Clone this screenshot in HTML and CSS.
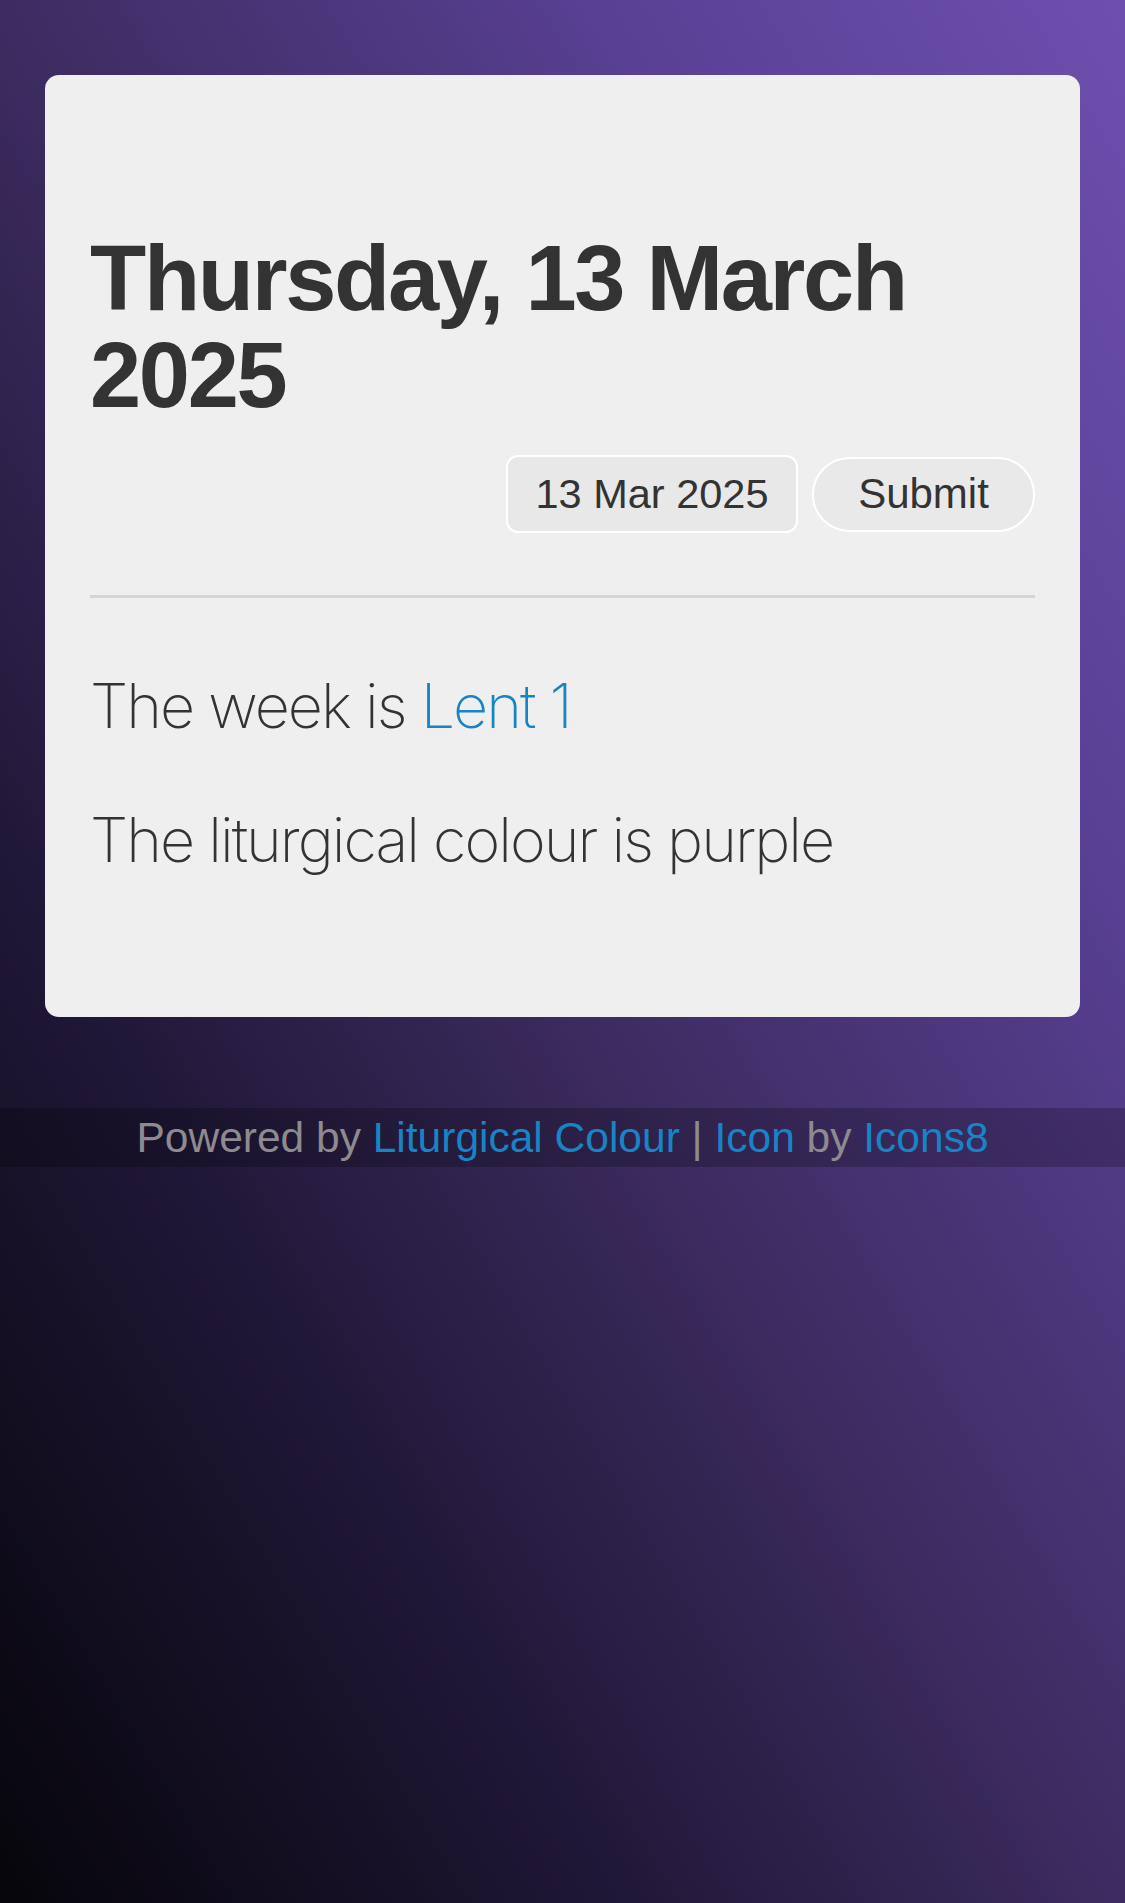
FILE: index.html
```html
<!DOCTYPE html>
<html lang="en">
<head>
<meta charset="utf-8">
<title>Liturgical Colour</title>
<link rel="stylesheet" href="styles.css">
</head>
<body>
  <main class="card">
    <h1 class="date-title">Thursday, 13 March 2025</h1>
    <form class="date-form">
      <div class="date-input">13 Mar 2025</div>
      <button type="button" class="submit-btn">Submit</button>
    </form>
    <hr class="divider">
    <p class="info">The week is <a href="#" class="link">Lent 1</a></p>
    <p class="info">The liturgical colour is purple</p>
  </main>
  <footer class="footer">
    Powered by <a href="#" class="link">Liturgical Colour</a> | <a href="#" class="link">Icon</a> by <a href="#" class="link">Icons8</a>
  </footer>
</body>
</html>
```

FILE: styles.css
```css
html, body {
  margin: 0;
  padding: 0;
}

body {
  min-height: 1903px;
  background: linear-gradient(to top right, #06050a 0%, #1f1736 27%, #3d2c61 50%, #5a4196 78%, #6d50ae 100%);
  font-family: "Liberation Sans", Arial, sans-serif;
  color: #333333;
  padding-top: 75px;
  box-sizing: border-box;
}

.card {
  margin: 0 45px;
  background: #efefef;
  border-radius: 14px;
  padding: 155px 45px 138px;
  display: flex;
  flex-direction: column;
}

.date-title {
  margin: 0;
  font-size: 92px;
  line-height: 97px;
  font-weight: 700;
  letter-spacing: -2.3px;
  color: #333333;
}

.date-form {
  margin: 31px 0 0;
  display: flex;
  justify-content: flex-end;
  align-items: center;
  gap: 14px;
}

.date-input {
  box-sizing: border-box;
  height: 78px;
  width: 292px;
  border: 2px solid #ffffff;
  border-radius: 12px;
  background: #e8e8e8;
  font-size: 41.5px;
  display: flex;
  align-items: center;
  justify-content: center;
  color: #333333;
}

.submit-btn {
  box-sizing: border-box;
  height: 75px;
  width: 223px;
  border: 2px solid #ffffff;
  border-radius: 40px;
  background: #e9e9e9;
  font-family: "Liberation Sans", Arial, sans-serif;
  font-size: 42px;
  color: #333333;
  padding: 0;
}

.divider {
  margin: 62px 0 0;
  border: 0;
  height: 3px;
  background: #d5d5d5;
}

.info {
  margin: 57px 0 0;
  font-family: Inter, Roboto, "Liberation Sans", sans-serif;
  font-weight: 200;
  font-size: 61px;
  line-height: 77px;
  letter-spacing: -2px;
  color: #333333;
}

.divider + .info {
  margin-top: 70px;
}

.link {
  color: #1784c6;
  text-decoration: none;
}

.footer {
  margin-top: 91px;
  height: 59px;
  line-height: 59px;
  background: rgba(0, 0, 0, 0.22);
  text-align: center;
  font-size: 42.5px;
  color: #8d8a90;
}
```
